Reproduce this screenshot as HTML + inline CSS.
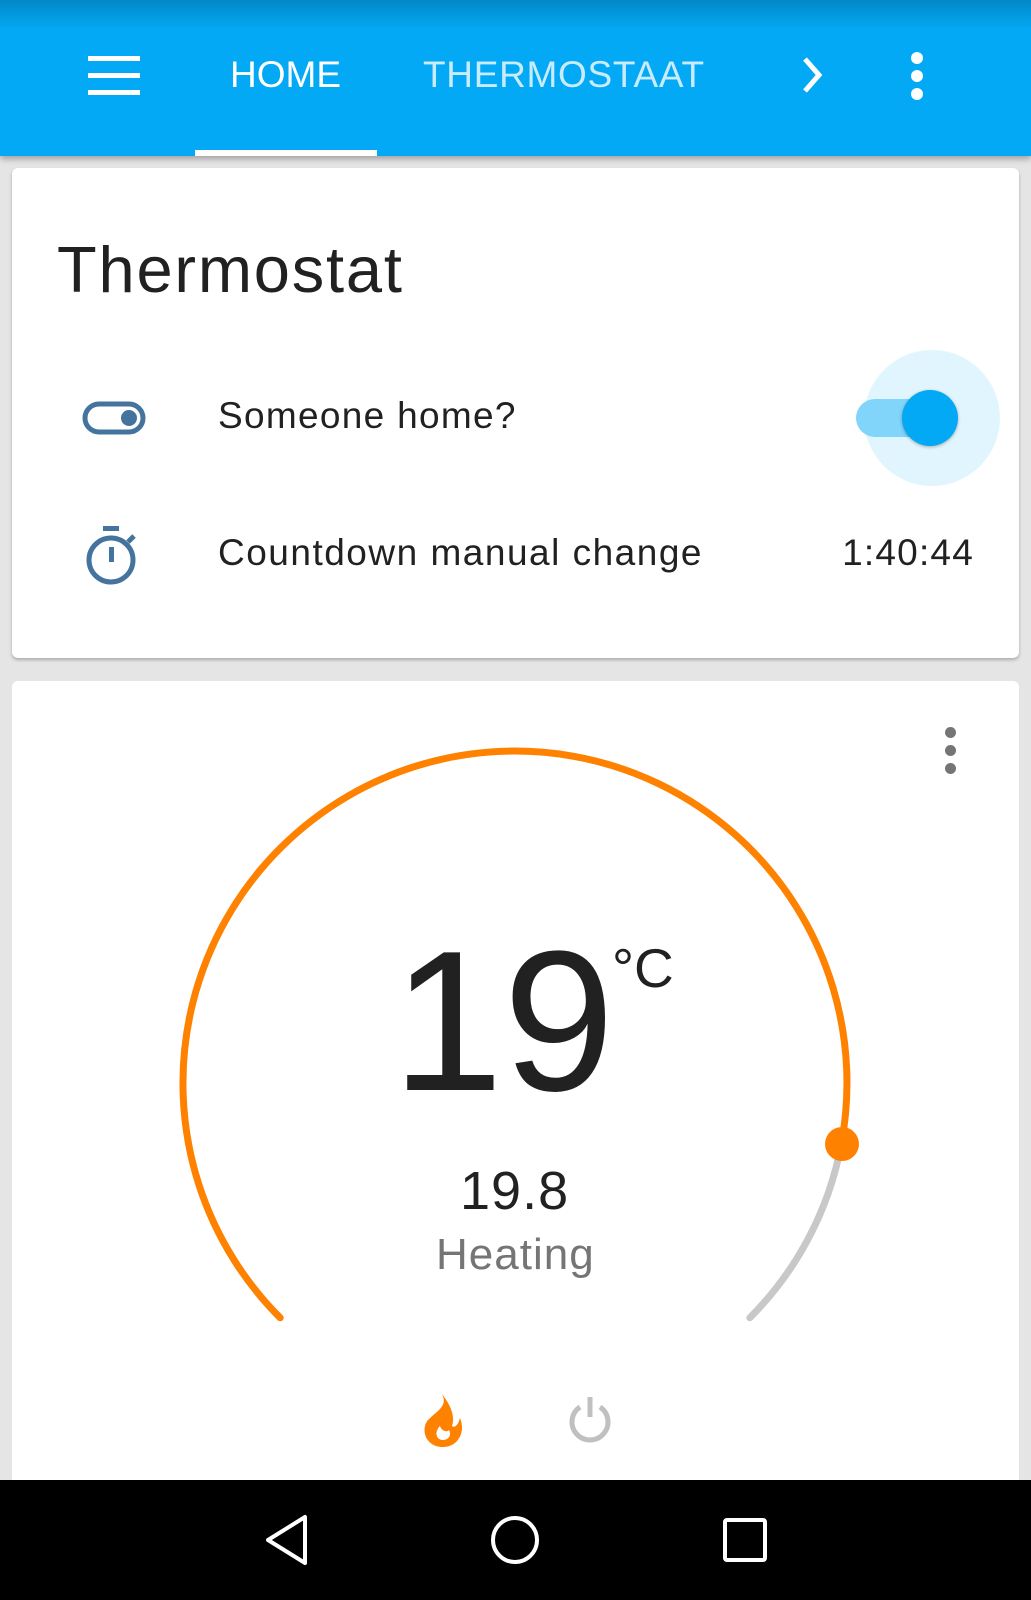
<!DOCTYPE html>
<html><head><meta charset="utf-8"><style>
*{margin:0;padding:0;box-sizing:border-box}
body{width:1031px;height:1600px;background:#e5e5e5;font-family:"Liberation Sans",sans-serif;position:relative;overflow:hidden}
.t{position:absolute;white-space:nowrap}
</style></head><body>
<div style="position:absolute;left:0;top:0;width:1031px;height:156px;background:#03a9f4;box-shadow:0 3px 6px rgba(0,0,0,.3)">
<div style="position:absolute;left:0;top:0;width:1031px;height:30px;background:linear-gradient(#0288c8,#03a9f4)"></div>
<div style="position:absolute;left:88px;top:56px;width:52px;height:5px;background:#fff"></div>
<div style="position:absolute;left:88px;top:73px;width:52px;height:5px;background:#fff"></div>
<div style="position:absolute;left:88px;top:90px;width:52px;height:5px;background:#fff"></div>
<div class="t" style="left:230px;top:54px;font-size:37px;color:#fff">HOME</div>
<div class="t" style="left:423px;top:54px;font-size:37px;color:#c8ecfd;letter-spacing:0.7px">THERMOSTAAT</div>
<svg style="position:absolute;left:795px;top:55px" width="40" height="40"><path d="M10 4 L24 20 L10 36" stroke="#fff" stroke-width="5" fill="none"/></svg>
<div style="position:absolute;left:911px;top:52px;width:12px;height:12px;border-radius:6px;background:#fff"></div>
<div style="position:absolute;left:911px;top:70px;width:12px;height:12px;border-radius:6px;background:#fff"></div>
<div style="position:absolute;left:911px;top:88px;width:12px;height:12px;border-radius:6px;background:#fff"></div>
<div style="position:absolute;left:195px;top:150px;width:182px;height:6px;background:#fff"></div>
</div>
<div style="position:absolute;left:12px;top:168px;width:1007px;height:490px;background:#fff;border-radius:6px;box-shadow:0 2px 3px rgba(0,0,0,.25)"></div>
<div class="t" style="left:57px;top:232px;font-size:65px;color:#212121;letter-spacing:1.8px">Thermostat</div>
<svg style="position:absolute;left:82px;top:400px" width="64" height="40"><rect x="3" y="4" width="58" height="28" rx="14" fill="none" stroke="#44739e" stroke-width="5"/><circle cx="47" cy="18" r="8" fill="#44739e"/></svg>
<svg style="position:absolute;left:84px;top:520px" width="60" height="70"><rect x="19" y="6" width="16" height="5" fill="#44739e"/><circle cx="27" cy="40" r="22" fill="none" stroke="#44739e" stroke-width="5"/><rect x="25" y="27" width="5" height="15" fill="#44739e"/><path d="M44 22 L50 16" stroke="#44739e" stroke-width="5"/></svg>
<div class="t" style="left:218px;top:395px;font-size:37px;color:#212121;letter-spacing:1.3px">Someone home?</div>
<div class="t" style="left:218px;top:532px;font-size:37px;color:#212121;letter-spacing:1.5px">Countdown manual change</div>
<div class="t" style="right:57px;top:532px;font-size:37px;color:#212121;letter-spacing:1.2px">1:40:44</div>
<div style="position:absolute;left:864px;top:350px;width:136px;height:136px;border-radius:68px;background:#e1f5fe"></div>
<div style="position:absolute;left:856px;top:399px;width:96px;height:38px;border-radius:19px;background:#81d4fa"></div>
<div style="position:absolute;left:902px;top:390px;width:56px;height:56px;border-radius:28px;background:#03a9f4;box-shadow:0 1px 3px rgba(0,0,0,.3)"></div>
<div style="position:absolute;left:12px;top:681px;width:1007px;height:820px;background:#fff;border-radius:6px"></div>
<div style="position:absolute;left:945px;top:727px;width:11px;height:11px;border-radius:6px;background:#757575"></div>
<div style="position:absolute;left:945px;top:745px;width:11px;height:11px;border-radius:6px;background:#757575"></div>
<div style="position:absolute;left:945px;top:763px;width:11px;height:11px;border-radius:6px;background:#757575"></div>
<svg style="position:absolute;left:0;top:0" width="1031" height="1600">
<path d="M280.2 1317.8 A332 332 0 1 1 841.3 1144.1" stroke="#ff8100" stroke-width="7" fill="none" stroke-linecap="round"/>
<path d="M841.3 1144.1 A332 332 0 0 1 749.8 1317.8" stroke="#c8c8c8" stroke-width="7" fill="none" stroke-linecap="round"/>
<circle cx="842" cy="1144" r="17" fill="#ff8100"/>
</svg>
<div class="t" style="left:392px;top:922px;font-size:200px;line-height:1;color:#212121">19</div>
<div class="t" style="left:612px;top:936px;font-size:55px;color:#212121">°C</div>
<div class="t" style="left:460px;top:1160px;font-size:54px;color:#212121;letter-spacing:1px">19.8</div>
<div class="t" style="left:436px;top:1230px;font-size:44px;color:#757575;letter-spacing:1px">Heating</div>
<svg style="position:absolute;left:418px;top:1392px" width="50" height="58"><path d="M24 2 C30 14 20 18 10 28 C2 38 8 55 25 55 C40 55 48 40 42 26 C40 34 36 36 34 34 C38 22 30 10 24 2 Z M25 48 C18 48 16 40 22 34 C24 40 30 40 31 38 C34 44 30 48 25 48 Z" fill="#ff8100" fill-rule="evenodd"/></svg>
<svg style="position:absolute;left:565px;top:1395px" width="50" height="50"><path d="M15 12 A18 18 0 1 0 35 12" stroke="#c0c0c0" stroke-width="5" fill="none"/><rect x="22.5" y="2" width="5" height="20" fill="#c0c0c0"/></svg>
<div style="position:absolute;left:0;top:1480px;width:1031px;height:120px;background:#000"></div>
<svg style="position:absolute;left:0;top:1480px" width="1031" height="120"><path d="M305 37 L305 83 L268 60 Z" stroke="#fff" stroke-width="4" fill="none" stroke-linejoin="round"/><circle cx="515" cy="60" r="22" stroke="#fff" stroke-width="4" fill="none"/><rect x="725" y="40" width="40" height="40" stroke="#fff" stroke-width="4" fill="none" rx="2"/></svg>
</body></html>
